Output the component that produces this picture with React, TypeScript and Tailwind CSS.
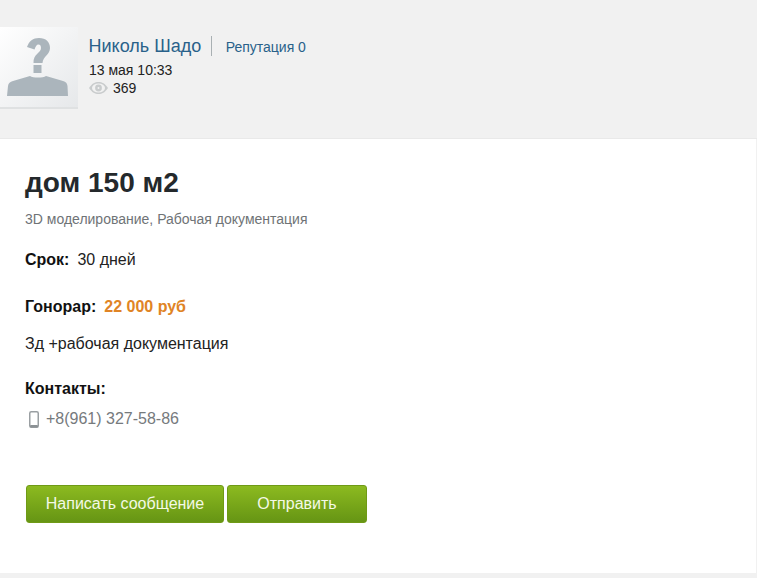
import React from "react";

function Avatar() {
  return (
    <div className="w-[78px] h-[82px] bg-gradient-to-br from-white to-[#e6e8ea] border-b-2 border-[#dfe1e2] shrink-0 overflow-hidden">
      <svg width="78" height="80" viewBox="0 0 78 80">
        <path
          d="M7 69 L8 59 C8.500 56 10 55 13 54 L30 49 C33 51 43 51 46 49 L63 54 C66 55 67 56 67.500 59 L68 69 Z"
          fill="#abb5bc"
        />
        <path
          d="M27 20 C29 14 33 11 39 11 C46 11 50 15 50 21 C50 28 43 29 42.500 36 L33.500 36 C33 27 41 26 41 21 C41 18.500 40 17.500 38.500 17.500 C36.500 17.500 35.500 19.500 34.500 22.500 Z"
          fill="#abb5bc"
        />
        <rect x="33.500" y="38" width="8" height="8" fill="#abb5bc" />
      </svg>
    </div>
  );
}

function EyeIcon() {
  return (
    <svg width="19" height="12" viewBox="0 0 19 12">
      <path d="M0 6 C3 1.500 6 0 9.500 0 C13 0 16 1.500 19 6 C16 10.500 13 12 9.500 12 C6 12 3 10.500 0 6 Z" fill="#c9cccd" />
      <ellipse cx="9.500" cy="6" rx="6.500" ry="4.600" fill="#f2f2f2" />
      <circle cx="9.500" cy="6" r="3.400" fill="#c9cccd" />
      <circle cx="9.500" cy="6" r="1" fill="#f2f2f2" />
    </svg>
  );
}

function PhoneIcon() {
  return (
    <svg width="10" height="17" viewBox="0 0 10 17">
      <rect x="0.750" y="0.750" width="8.500" height="15.500" rx="1.500" fill="none" stroke="#9a9fa2" strokeWidth="1.500" />
      <rect x="1" y="14" width="8" height="2.500" rx="1" fill="#8b9194" />
    </svg>
  );
}

const btn =
  "h-[38px] rounded-[3px] border border-[#6f9a16] bg-gradient-to-b from-[#8cba20] to-[#669514] text-[#f4f9e6] text-[16px] flex items-center justify-center";

export default function App() {
  return (
    <div className="w-[757px] h-[578px] bg-[#f1f1f1] font-['Liberation_Sans',Arial,sans-serif] overflow-hidden">
      <div className="h-[139px] pt-[27px] flex items-start border-b border-[#e9e9e9]">
        <Avatar />
        <div className="ml-[11px] pt-[9px]">
          <div className="flex items-center h-[20px]">
            <span className="text-[18px] text-[#29618a] -ml-[0.5px]">Николь Шадо</span>
            <span className="ml-[10px] h-[20px] border-l border-[#a9b0b3]" />
            <span className="ml-[13.5px] mt-[2px] text-[14px] text-[#29618a]">Репутация 0</span>
          </div>
          <div className="mt-[6px] text-[14px] leading-[16px] text-[#222]">13 мая 10:33</div>
          <div className="mt-[2px] flex items-center gap-[5px] text-[14px] leading-[16px] text-[#222]">
            <EyeIcon />
            369
          </div>
        </div>
      </div>

      <div className="w-[756px] h-[434px] bg-white pl-[25px] pt-[28px]">
        <h1 className="text-[28px] leading-[32px] font-bold text-[#24292c]">дом 150 м2</h1>
        <div className="mt-[12px] text-[14px] leading-[16px] text-[#6f7376]">
          3D моделирование, Рабочая документация
        </div>
        <div className="mt-[24px] text-[16px] leading-[18px] text-[#222]">
          <b className="text-[#111]">Срок:</b>
          <span className="ml-[8px]">30 дней</span>
        </div>
        <div className="mt-[29px] text-[16px] leading-[18px] font-bold text-[#111]">
          Гонорар:
          <span className="ml-[8px] text-[#e08425]">22 000 руб</span>
        </div>
        <div className="mt-[19px] text-[16px] leading-[18px] text-[#222]">Зд +рабочая документация</div>
        <div className="mt-[27px] text-[16px] leading-[18px] font-bold text-[#111]">Контакты:</div>
        <div className="mt-[12px] flex items-center gap-[7px] text-[16px] leading-[18px] text-[#767a7d] pl-[4px]">
          <PhoneIcon />
          +8(961) 327-58-86
        </div>
        <div className="mt-[57px] ml-[1px] flex gap-[3px]">
          <button className={`${btn} w-[198px]`}>Написать сообщение</button>
          <button className={`${btn} w-[140px]`}>Отправить</button>
        </div>
      </div>
    </div>
  );
}
